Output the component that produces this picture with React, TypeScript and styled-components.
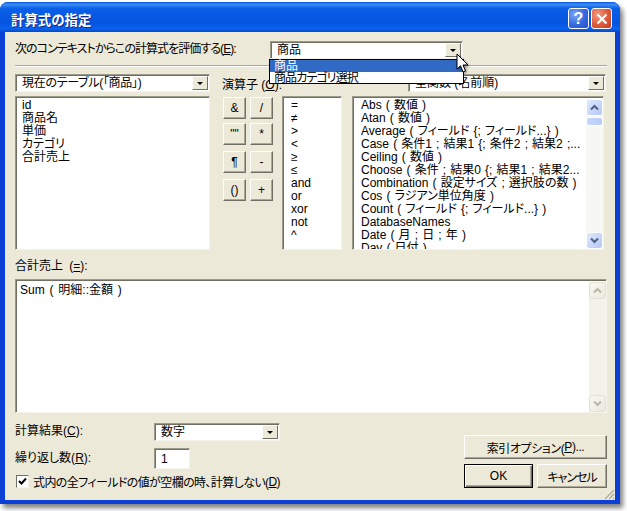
import React from "react";
import styled, { createGlobalStyle } from "styled-components";

const GlobalStyle = createGlobalStyle`
  html, body {
    margin: 0;
    padding: 0;
    background: #ffffff;
    overflow: hidden;
  }
  body {
    font-family: "Liberation Sans", "Noto Sans CJK JP", sans-serif;
    font-size: 12px;
    font-feature-settings: "palt";
    color: #000000;
  }
`;

const Page = styled.div`
  width: 627px;
  height: 511px;
  padding-top: 2px;
  box-sizing: border-box;
`;

const Win = styled.div`
  position: relative;
  width: 620px;
  height: 502px;
  border-radius: 8px 8px 0 0;
  background: #0a40d8;
  box-shadow: 3px 4px 5px rgba(0, 0, 0, 0.5);
  display: flex;
  flex-direction: column;
`;

const TitleBar = styled.div`
  height: 30px;
  flex: none;
  box-sizing: border-box;
  display: flex;
  align-items: center;
  padding: 3px 8px 0 11px;
  border-radius: 8px 8px 0 0;
  background: linear-gradient(180deg, #0a5ae6 0%, #3c8cf5 8%, #0a5fe8 22%, #0554e0 70%, #0a62ee 90%, #0548c8 100%);
`;

const Title = styled.div`
  flex: 1;
  color: #ffffff;
  font-size: 13.4px;
  font-weight: bold;
  font-feature-settings: normal;
  text-shadow: 1px 1px 0 #0f2a90;
`;

const CaptionButton = styled.div<{ $close?: boolean }>`
  width: 21px;
  height: 21px;
  margin-left: 2px;
  border: 1px solid #ffffff;
  border-radius: 3px;
  box-sizing: border-box;
  display: flex;
  align-items: center;
  justify-content: center;
  color: #ffffff;
  font-size: 16px;
  font-weight: bold;
  background: ${(p) =>
    p.$close
      ? "radial-gradient(circle at 30% 30%, #f09a80, #dd5a38 55%, #c23a1c)"
      : "radial-gradient(circle at 30% 30%, #7ea6f5, #3468e0 55%, #2550c8)"};
`;

const Body = styled.div`
  flex: 1;
  margin: 0 5px 4px;
  background: #ece9d8;
  padding: 9px 8px 0 10px;
  position: relative;
`;

const ContextRow = styled.div`
  display: flex;
  align-items: flex-start;
  height: 20px;
`;

const ContextLabel = styled.div`
  width: 255px;
  flex: none;
  line-height: 17px;
  letter-spacing: -0.95px;
  white-space: nowrap;
`;

const Ul = styled.span`
  text-decoration: underline;
`;

const Combo = styled.div<{ $width: number }>`
  width: ${(p) => p.$width}px;
  height: 18px;
  flex: none;
  box-sizing: border-box;
  display: flex;
  align-items: center;
  background: #ffffff;
  border: 1px solid;
  border-color: #9c9a8a #f4f3ec #f4f3ec #9c9a8a;
  box-shadow: inset 1px 1px 0 #716f64;
  padding: 1px 1px 1px 6px;
  white-space: nowrap;
  overflow: hidden;
`;

const ComboText = styled.div<{ $track?: number }>`
  flex: 1;
  overflow: hidden;
  line-height: 14px;
  margin-top: -1px;
  letter-spacing: ${(p) => p.$track ?? 0}px;
`;

const ComboArrow = styled.div`
  width: 16px;
  height: 14px;
  flex: none;
  box-sizing: border-box;
  background: #ece9d8;
  border: 1px solid;
  border-color: #ffffff #716f64 #716f64 #ffffff;
  display: flex;
  align-items: center;
  justify-content: center;

  &::after {
    content: "";
    border-left: 3px solid transparent;
    border-right: 3px solid transparent;
    border-top: 3px solid #000000;
    margin-top: 1px;
  }
`;

const Separator = styled.div`
  height: 2px;
  margin-top: 4px;
  background: linear-gradient(180deg, #aca899 50%, #ffffff 50%);
`;

const SelectorRow = styled.div`
  display: flex;
  align-items: center;
  margin-top: 7px;
  height: 18px;
`;

const OperatorLabel = styled.div`
  margin-left: 12px;
  width: 186px;
  flex: none;
  white-space: nowrap;
  overflow: hidden;
`;

const ListsRow = styled.div`
  display: flex;
  margin-top: 4px;
  height: 154px;
`;

const ListBox = styled.div<{ $width: number; $gap: number; $pad?: number; $wordGap?: number }>`
  width: ${(p) => p.$width}px;
  margin-left: ${(p) => p.$gap}px;
  flex: none;
  box-sizing: border-box;
  background: #ffffff;
  border: 1px solid;
  border-color: #9c9a8a #f4f3ec #f4f3ec #9c9a8a;
  box-shadow: inset 1px 1px 0 #716f64;
  padding: 2px 0 0 ${(p) => p.$pad ?? 6}px;
  display: flex;
  overflow: hidden;
  word-spacing: ${(p) => p.$wordGap ?? 0}px;
`;

const ListLines = styled.div`
  flex: 1;
  min-width: 0;
  overflow: hidden;
`;

const ListItem = styled.div`
  height: 13px;
  line-height: 13px;
  white-space: nowrap;
`;

const OperatorPad = styled.div`
  margin-left: 13px;
  width: 50px;
  flex: none;
  padding-top: 1px;
`;

const OperatorRow = styled.div<{ $top: number }>`
  display: flex;
  justify-content: space-between;
  margin-top: ${(p) => p.$top}px;
`;

const Btn = styled.div<{ $width?: number; $height?: number; $default?: boolean; $track?: number }>`
  width: ${(p) => p.$width ?? 23}px;
  height: ${(p) => p.$height ?? 22}px;
  box-sizing: border-box;
  display: flex;
  align-items: center;
  justify-content: center;
  background: #ece9d8;
  border: 1px solid;
  border-color: ${(p) => (p.$default ? "#000000" : "#ffffff #716f64 #716f64 #ffffff")};
  box-shadow: ${(p) =>
    p.$default
      ? "inset 1px 1px 0 #ffffff, inset -1px -1px 0 #716f64, inset -2px -2px 0 #aca899"
      : "inset -1px -1px 0 #aca899"};
  letter-spacing: ${(p) => p.$track ?? 0}px;
  white-space: nowrap;
`;

const ScrollBar = styled.div<{ $disabled?: boolean }>`
  width: 17px;
  flex: none;
  display: flex;
  flex-direction: column;
  background: ${(p) => (p.$disabled ? "#f3f2ea" : "#f7f7f3")};
`;

const ScrollButton = styled.div<{ $disabled?: boolean }>`
  height: 17px;
  flex: none;
  box-sizing: border-box;
  border: 1px solid ${(p) => (p.$disabled ? "#e4e2d4" : "#ffffff")};
  border-radius: 3px;
  display: flex;
  align-items: center;
  justify-content: center;
  background: ${(p) =>
    p.$disabled
      ? "linear-gradient(135deg, #f8f8f2, #ebe9dc)"
      : "linear-gradient(135deg, #dfe8fd, #b4c8f6)"};
  color: ${(p) => (p.$disabled ? "#b8b6a8" : "#4d6185")};
`;

const ScrollThumb = styled.div`
  height: 9px;
  flex: none;
  margin-top: 1px;
  box-sizing: border-box;
  border: 1px solid #ffffff;
  border-radius: 3px;
  background: linear-gradient(90deg, #c8d8fb, #b8cbf8);
`;

const ScrollSpace = styled.div`
  flex: 1;
`;

const FormulaLabel = styled.div`
  margin-top: 8px;
  height: 21px;
  line-height: 16px;
  word-spacing: 3px;
`;

const FormulaBox = styled.div`
  height: 134px;
  box-sizing: border-box;
  background: #ffffff;
  border: 1px solid;
  border-color: #9c9a8a #f4f3ec #f4f3ec #9c9a8a;
  box-shadow: inset 1px 1px 0 #716f64;
  display: flex;
  padding: 2px 0 0 4px;
`;

const FormulaText = styled.div`
  flex: 1;
  line-height: 13px;
  margin-top: 2px;
  word-spacing: 1.5px;
`;

const BottomArea = styled.div`
  display: flex;
  justify-content: space-between;
  margin-top: 10px;
`;

const OptionsColumn = styled.div`
  display: flex;
  flex-direction: column;
`;

const FieldRow = styled.div<{ $top?: number }>`
  display: flex;
  align-items: center;
  margin-top: ${(p) => p.$top ?? 0}px;
`;

const FieldLabel = styled.div`
  width: 139px;
  flex: none;
  line-height: 14px;
  margin-top: -2px;
`;

const NumberBox = styled.div`
  width: 36px;
  height: 21px;
  box-sizing: border-box;
  background: #ffffff;
  border: 1px solid;
  border-color: #9c9a8a #f4f3ec #f4f3ec #9c9a8a;
  box-shadow: inset 1px 1px 0 #716f64;
  padding-left: 6px;
  display: flex;
  align-items: center;
`;

const CheckRow = styled.div`
  display: flex;
  align-items: center;
  margin-top: 4px;
  letter-spacing: -0.6px;
  white-space: nowrap;
`;

const CheckBox = styled.div`
  width: 13px;
  height: 13px;
  flex: none;
  margin: 0 4px 0 1px;
  box-sizing: border-box;
  background: #ffffff;
  border: 1px solid;
  border-color: #716f64 #f4f3ec #f4f3ec #716f64;
  display: flex;
  align-items: center;
  justify-content: center;
`;

const ButtonColumn = styled.div`
  width: 143px;
  margin-top: 12px;
  display: flex;
  flex-direction: column;
  gap: 5px;
`;

const ButtonPair = styled.div`
  display: flex;
  justify-content: space-between;
`;

const Dropdown = styled.div`
  position: absolute;
  left: 264px;
  top: 27px;
  width: 195px;
  height: 25px;
  box-sizing: border-box;
  border: 1px solid #000000;
  background: #ffffff;
`;

const DropdownItem = styled.div<{ $selected?: boolean; $track?: number }>`
  height: 12px;
  line-height: 12px;
  padding-left: 4px;
  white-space: nowrap;
  letter-spacing: ${(p) => p.$track ?? 0}px;
  background: ${(p) => (p.$selected ? "#316ac5" : "transparent")};
  color: ${(p) => (p.$selected ? "#ffffff" : "#000000")};
`;

const Cursor = styled.svg`
  position: absolute;
  left: 451px;
  top: 21px;
  filter: drop-shadow(1px 1px 1px rgba(0, 0, 0, 0.5));
`;

const Grip = styled.svg`
  position: absolute;
  right: 0;
  bottom: 0;
`;

const Arrow = ({ down }: { down?: boolean }) => (
  <svg width="9" height="7" viewBox="0 0 9 7">
    <path
      d={down ? "M1 1.5 L4.5 5 L8 1.5" : "M1 5.5 L4.5 2 L8 5.5"}
      fill="none"
      stroke="currentColor"
      strokeWidth="2"
    />
  </svg>
);

const fields = ["id", "商品名", "単価", "カテゴリ", "合計売上"];
const operators = ["=", "≠", ">", "<", "≥", "≤", "and", "or", "xor", "not", "^"];
const functions = [
  "Abs ( 数値 )",
  "Atan ( 数値 )",
  "Average ( フィールド {; フィールド...} )",
  "Case ( 条件1 ; 結果1 {; 条件2 ; 結果2 ;...",
  "Ceiling ( 数値 )",
  "Choose ( 条件 ; 結果0 {; 結果1 ; 結果2...",
  "Combination ( 設定サイズ ; 選択肢の数 )",
  "Cos ( ラジアン単位角度 )",
  "Count ( フィールド {; フィールド...} )",
  "DatabaseNames",
  "Date ( 月 ; 日 ; 年 )",
  "Day ( 日付 )",
];

const padRows = [
  { top: 0, keys: ["&", "/"] },
  { top: 4, keys: ['""', "*"] },
  { top: 6, keys: ["¶", "-"] },
  { top: 6, keys: ["()", "+"] },
];

export default function App() {
  return (
    <Page>
      <GlobalStyle />
      <Win>
        <TitleBar>
          <Title>計算式の指定</Title>
          <CaptionButton>?</CaptionButton>
          <CaptionButton $close>
            <svg width="12" height="12" viewBox="0 0 12 12">
              <path d="M1.5 1.5 L10.5 10.5 M10.5 1.5 L1.5 10.5" stroke="#fff" strokeWidth="2.2" />
            </svg>
          </CaptionButton>
        </TitleBar>
        <Body>
          <ContextRow>
            <ContextLabel>
              次のコンテキストからこの計算式を評価する(<Ul>E</Ul>):
            </ContextLabel>
            <Combo $width={193}>
              <ComboText>商品</ComboText>
              <ComboArrow />
            </Combo>
          </ContextRow>
          <Separator />
          <SelectorRow>
            <Combo $width={195}>
              <ComboText $track={-0.3}>現在のテーブル(「商品」)</ComboText>
              <ComboArrow />
            </Combo>
            <OperatorLabel>
              演算子 (<Ul>O</Ul>):
            </OperatorLabel>
            <Combo $width={198}>
              <ComboText>全関数 (名前順)</ComboText>
              <ComboArrow />
            </Combo>
          </SelectorRow>
          <ListsRow>
            <ListBox $width={195} $gap={0}>
              <ListLines>
                {fields.map((f) => (
                  <ListItem key={f}>{f}</ListItem>
                ))}
              </ListLines>
            </ListBox>
            <OperatorPad>
              {padRows.map((row) => (
                <OperatorRow key={row.keys[0]} $top={row.top}>
                  {row.keys.map((k) => (
                    <Btn key={k}>{k}</Btn>
                  ))}
                </OperatorRow>
              ))}
            </OperatorPad>
            <ListBox $width={60} $gap={9} $pad={8}>
              <ListLines>
                {operators.map((o) => (
                  <ListItem key={o}>{o}</ListItem>
                ))}
              </ListLines>
            </ListBox>
            <ListBox $width={252} $gap={10} $pad={8} $wordGap={0.8}>
              <ListLines>
                {functions.map((f) => (
                  <ListItem key={f}>{f}</ListItem>
                ))}
              </ListLines>
              <ScrollBar>
                <ScrollButton>
                  <Arrow />
                </ScrollButton>
                <ScrollThumb />
                <ScrollSpace />
                <ScrollButton>
                  <Arrow down />
                </ScrollButton>
              </ScrollBar>
            </ListBox>
          </ListsRow>
          <FormulaLabel>
            合計売上 (<Ul>=</Ul>):
          </FormulaLabel>
          <FormulaBox>
            <FormulaText>Sum ( 明細::金額 )</FormulaText>
            <ScrollBar $disabled>
              <ScrollButton $disabled>
                <Arrow />
              </ScrollButton>
              <ScrollSpace />
              <ScrollButton $disabled>
                <Arrow down />
              </ScrollButton>
            </ScrollBar>
          </FormulaBox>
          <BottomArea>
            <OptionsColumn>
              <FieldRow>
                <FieldLabel>
                  計算結果(<Ul>C</Ul>):
                </FieldLabel>
                <Combo $width={126}>
                  <ComboText>数字</ComboText>
                  <ComboArrow />
                </Combo>
              </FieldRow>
              <FieldRow $top={7}>
                <FieldLabel>
                  繰り返し数(<Ul>R</Ul>):
                </FieldLabel>
                <NumberBox>1</NumberBox>
              </FieldRow>
              <CheckRow>
                <CheckBox>
                  <svg width="9" height="9" viewBox="0 0 9 9">
                    <path d="M1 4 L3.5 6.5 L8 1.5" fill="none" stroke="#000" strokeWidth="2" />
                  </svg>
                </CheckBox>
                式内の全フィールドの値が空欄の時、計算しない(<Ul>D</Ul>)
              </CheckRow>
            </OptionsColumn>
            <ButtonColumn>
              <Btn $width={143} $height={24} $track={-0.4}>
                索引オプション(<Ul>P</Ul>)...
              </Btn>
              <ButtonPair>
                <Btn $width={69} $height={24} $default>
                  OK
                </Btn>
                <Btn $width={70} $height={24} $track={-1}>
                  キャンセル
                </Btn>
              </ButtonPair>
            </ButtonColumn>
          </BottomArea>
          <Dropdown>
            <DropdownItem $selected>商品</DropdownItem>
            <DropdownItem $track={-0.9}>商品カテゴリ選択</DropdownItem>
          </Dropdown>
          <Cursor width="14" height="21" viewBox="0 0 14 21">
            <path
              d="M1 1 L1 16 L4.5 12.8 L7 19 L9.5 18 L7 12 L12 12 Z"
              fill="#ffffff"
              stroke="#000000"
              strokeWidth="1"
            />
          </Cursor>
          <Grip width="12" height="12" viewBox="0 0 12 12">
            <path d="M11 2 L2 11 M11 6 L6 11 M11 10 L10 11" stroke="#aca899" strokeWidth="1.2" />
          </Grip>
        </Body>
      </Win>
    </Page>
  );
}
